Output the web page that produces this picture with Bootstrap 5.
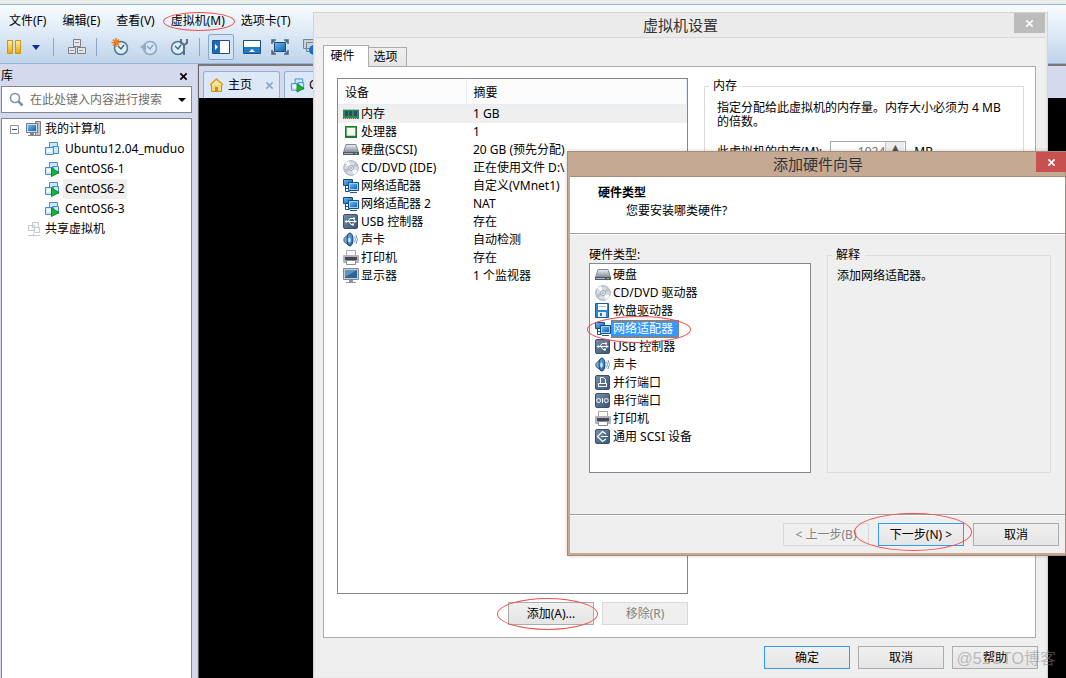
<!DOCTYPE html>
<html lang="zh-CN">
<head>
<meta charset="utf-8">
<meta name="viewport" content="width=device-width, initial-scale=1">
<title>虚拟机设置</title>
<link rel="stylesheet" href="https://cdn.jsdelivr.net/npm/bootstrap@5.3.0/dist/css/bootstrap.min.css">
<style>
body{font:12px/18px "Noto Sans","Noto Sans CJK SC",sans-serif;color:#000;height:100vh;overflow:hidden;background:#ebebeb;cursor:default}
svg{flex:none}
.app{height:100vh;padding-top:4px}
.bars{height:60px;border-top:1px solid #93b5d8;border-bottom:1px solid #93b5d8;background:linear-gradient(#f9fcff,#dce9f6 50%,#bfd3ea)}
.menus{gap:16px;padding:7px 9px 0}
.menus button,.plain{border:0;background:none;padding:0;color:inherit;line-height:18px}
.tools{height:34px;padding-left:5px}
.tools .sep{width:1px;height:18px;background:#88a8cb}
.tools button{border:1px solid transparent;background:none;padding:0;display:flex;align-items:center;justify-content:center}
.tools .clock{width:22px}
.tools .held{border-color:#86a7cf;background:#d3e3f5;width:26px;height:26px;border-radius:2px}
.side{width:198px;flex:none;background:#d4d9ed;padding:2px 5px 0 1px;border-right:1px solid #c7cce0}
.side-head{height:20px}
.find{height:27px;border:1px solid #828790;background:#fff;padding:0 5px 0 7px;margin-bottom:5px}
.find input{border:0;outline:0;min-width:0;padding:0 0 0 6px;background:none}
.find input::placeholder{color:#6d6d6d;opacity:1}
.tree{border:1px solid #828790;border-bottom:0;background:#fff;padding:0 0 0 8px}
.tree li{height:20px;gap:3px}
.tree .kid{padding-left:34px}
.tree .kid span{padding:0 2px;line-height:20px}
.tree .on{background:#efefef}
.stage{border-left:1px solid #646464;border-top:2px solid #777;background:#000}
.tabstrip{height:32px;background:#d4d9ed;padding:5px 0 0 4px;gap:4px}
.tabstrip>button{border:1px solid #8db0d2;border-bottom:0;border-radius:3px 3px 0 0;background:#dce8f6;padding:0 5px;height:27px;gap:4px;min-width:77px;white-space:nowrap}
.win{position:absolute}
.settings{left:313px;right:18px;top:12px;bottom:0;background:#ebebeb;border:1px solid #d4d4d4;border-width:1px 1px 0;padding:0 2px 1px}
.win-title{font:15px/24px "Noto Sans CJK SC",sans-serif;color:#333}
.shut{position:absolute;top:0;right:2px;height:20px;width:31px;border:0;border-radius:0;background:#bcbcbc;color:#fff;padding:0;display:flex;align-items:center;justify-content:center}
.client{background:#efefef;border-top:1px solid #d9d9d9;padding:7px 7px 8px}
.sheet-tabs{z-index:1}
.sheet-tabs button{border:1px solid #acacac;border-bottom:0;border-radius:0;background:linear-gradient(#f0f0f0,#e5e5e5);height:19px;width:39px;padding:0 4px 0 0;margin-left:-1px}
.sheet-tabs .cur{height:22px;width:46px;margin:0 0 -1px;background:#fff;padding:0 7px 1px 0}
.sheet{border:1px solid #acacac;background:#fff;padding:11px 11px 12px 13px;margin-right:2px;min-height:0}
.devs{width:351px;flex:none}
.frame{border:1px solid #828790;background:#fff}
.devs table{width:100%;border-collapse:collapse;table-layout:fixed}
.devs th{font-weight:400;height:25px;padding:3px 0 0 7px;background:#fcfcfc;border-bottom:1px solid #e4edf8;border-right:1px solid #e4edf8}
.devs td{height:18px;padding:0 0 0 7px;line-height:18px;white-space:nowrap}
.devs td:first-child{padding-left:5px}
.devs .sel td{background:#efefef}
.dev{display:flex;align-items:center;gap:2px;height:18px}
.btn3{position:relative;width:86px;height:23px;padding:0;border:1px solid #acacac;border-radius:0;background:linear-gradient(#f0f0f0,#e5e5e5);color:#000;flex:none}
.btn3.main{border-color:#3399ff}
.btn3:disabled{border-color:#d9d9d9;background:#efefef;color:#838383}
.ring{position:absolute;border:1px solid #f04e4e;border-radius:50%;pointer-events:none;z-index:5}
.box{border:1px solid #dcdcdc;margin:0;padding:0 10px 0 12px;min-width:0}
.box legend{float:none;width:auto;font-size:12px;line-height:16px;padding:0 5px 0 4px;margin:0 0 0 -8px}
.box.explain{padding-left:9px}
.box.explain legend{margin-left:-5px}
.note{line-height:14px;margin:7px 0 12px}
.num{width:76px;height:22px;border:1px solid #aaa}
.num input{width:54px;border:0;text-align:right;color:#777;padding:0}
.num i{width:19px;background:#ececec;border-left:1px solid #ccc;text-align:center;font:8px/12px "DejaVu Sans",sans-serif;color:#555}
.wizard{left:567px;right:0;top:151px;height:405px;background:#efefef;border:3px solid #c6a993;border-width:1px 0 3px 3px;outline:1px solid #a78c78;outline-offset:-1px;box-shadow:0 0 4px #0003}
.wizard .win-title{background:#c6a993;border-bottom:1px solid #a78c78;height:25px}
.wizard .shut{background:#c75050;width:30px;right:0}
.wiz-head{background:#fff;height:57px;border-bottom:1px solid #a0a0a0;padding:7px 0 0 28px}
.wiz-body{padding:12px 15px 41px 19px;border-top:1px solid #fff;gap:16px}
.kind-label{line-height:16px}
.kinds{width:222px;padding:2px 5px}
.pick{position:relative}
.pick .dev span{background:#3399ff;color:#fff;outline:1px dotted #c66a1c;outline-offset:-1px;padding:0 6px 0 2px;margin-left:-2px}
.wiz-foot{border-top:1px solid #a0a0a0;box-shadow:inset 0 1px #fff;padding:8px 7px 7px;gap:9px}
.stamp{position:absolute;right:10px;bottom:9px;font:16px/20px "Liberation Sans","Noto Sans CJK SC",sans-serif;color:#888;opacity:.5;z-index:6;pointer-events:none}
</style>
</head>
<body>
<svg class="position-absolute" width="0" height="0" aria-hidden="true">
<defs>
<linearGradient id="gy" x2="0" y2="1"><stop stop-color="#fff0a0"/><stop offset="1" stop-color="#e5a512"/></linearGradient>
<linearGradient id="gb" x2="1" y2="1"><stop stop-color="#6fb7ec"/><stop offset="1" stop-color="#1262b2"/></linearGradient>
<linearGradient id="gs" x2="1" y2="1"><stop stop-color="#7591ae"/><stop offset="1" stop-color="#385470"/></linearGradient>
<linearGradient id="gg" x2="0" y2="1"><stop stop-color="#f0f2f5"/><stop offset="1" stop-color="#7d858f"/></linearGradient>
</defs>
<symbol id="ram" viewBox="0 0 16 16"><path fill="#278a66" d="M0 3h16v10H0z"/><path fill="#9bd3b6" d="M0 3h16v1H0z"/><path fill="#39475a" d="M2 5h3v5H2zM6 5h3v5H6zM11 5h3v5h-3z"/><path stroke="#e2c38e" stroke-dasharray="1 1" d="M1 12.500h14"/></symbol>
<symbol id="cpu" viewBox="0 0 16 16"><path fill="#1c7a32" d="M2 2h12v12H2z"/><path fill="#52b35e" d="M3 3h10v9H3z"/><path fill="#f5f6f1" d="M4 4h8v8H4z"/><path fill="#c8cfc5" d="M4 11h8v1H4z"/></symbol>
<symbol id="hdd" viewBox="0 0 16 16"><path fill="url(#gg)" stroke="#808995" d="M3 2.500h10l2.500 8h-15z"/><path fill="#505a66" d="M0 10h16v3H0z"/><path fill="#aab3bb" d="M1 11h9v1H1z"/><path fill="#54d655" d="M12 11h2v1h-2z"/></symbol>
<symbol id="disc" viewBox="0 0 16 16"><circle cx="8" cy="8" r="7.300" fill="#d7dce4" stroke="#a2aab6"/><path fill="#fff" d="M8 8 2 3l4-2zM8 8l7 3-4 4z"/><path fill="#b9c2ce" d="m8 8 5-6 2 4zM8 8l-5 5-2-4z"/><circle cx="8" cy="8" r="2.500" fill="#eef1f5" stroke="#9aa4b2"/><circle cx="8" cy="8" r=".8" fill="#66758b"/></symbol>
<symbol id="net" viewBox="0 0 16 16"><path fill="url(#gb)" stroke="#174f80" d="M.5 1.500h9v6h-9z"/><path fill="none" stroke="#174f80" d="M2.500 8v5.500h4M2 10.500h3"/><path fill="#9ad4fa" stroke="#0d4f92" d="M5.500 4.500h10v8h-10z"/><path fill="url(#gb)" d="M7 6h7v5H7z"/><path stroke="#29597f" d="M7 14.500h7"/></symbol>
<symbol id="usb" viewBox="0 0 16 16"><rect x=".5" y=".5" width="14" height="14" rx="1.500" fill="url(#gs)" stroke="#3b526a"/><path fill="none" stroke="#fff" d="M3 7.500h9M5 7.500l2-3h3M6 7.500l2 3h2"/><path fill="#fff" d="M1.500 7.500 4 6v3zM11 6l3 1.500L11 9zM10 3.500h2v2h-2zM9 9.500h2v2H9z"/></symbol>
<symbol id="snd" viewBox="0 0 16 16"><path fill="#8eabc7" stroke="#2c5379" d="M1 6.500 6 1.500v12l-5-4z"/><ellipse cx="7" cy="7.500" rx="3" ry="6.500" fill="url(#gb)" stroke="#1b426a"/><ellipse cx="6.500" cy="8" rx="1.300" ry="2.500" fill="#cde6f8"/><path fill="none" stroke="#6f9ac0" d="M11.500 4.500q2 3 0 6M13 3q3 4.500 0 9"/></symbol>
<symbol id="prn" viewBox="0 0 16 16"><path fill="#fafafa" stroke="#a5a9b0" d="M3.500.500h9v5h-9z"/><rect y="5" width="16" height="8" rx="1" fill="#b1b3c0"/><path fill="#45484f" d="M2 7h12v3H2z"/><path fill="#fff" stroke="#878b92" d="M3.500 10.500h9v4h-9z"/></symbol>
<symbol id="mon" viewBox="0 0 16 16"><path fill="#c8ced5" stroke="#7e8995" d="M.5.5h15v11H.5z"/><path fill="#2e6497" d="M2 2h12v8H2z"/><path fill="#5b93c2" d="M2 2h12L2 9z"/><path fill="#8b96a3" d="M6 12h4v2H6zM3 14h10v1H3z"/></symbol>
<symbol id="flop" viewBox="0 0 16 16"><path fill="#2d86d6" stroke="#1a5ca0" d="M.5.5h13v14H.5z"/><path fill="#fff" d="M3 1h9v6H3z"/><path fill="#9cc6ec" d="M4 3h7v1H4z"/><path fill="#e9f2fa" d="M3 9h8v5H3z"/><path fill="#2873b7" d="M5 10h2v3H5z"/></symbol>
<symbol id="par" viewBox="0 0 16 16"><rect x=".5" y=".5" width="14" height="14" rx="1.500" fill="url(#gs)" stroke="#3b526a"/><path fill="none" stroke="#fff" d="M5.500 8.500v-6h3l2 2v4M3.500 8.500h8v3h-8z"/></symbol>
<symbol id="ser" viewBox="0 0 16 16"><rect x=".5" y=".5" width="14" height="14" rx="1.500" fill="url(#gs)" stroke="#3b526a"/><g fill="none" stroke="#fff"><circle cx="3.700" cy="7.500" r="2"/><circle cx="11.300" cy="7.500" r="2"/><path d="M7.500 5v5"/></g></symbol>
<symbol id="scsi" viewBox="0 0 16 16"><rect x=".5" y=".5" width="14" height="14" rx="1.500" fill="url(#gs)" stroke="#3b526a"/><path fill="none" stroke="#fff" stroke-width="1.200" d="M11 5 7.500 2.500l-5 5 5 5L11 10M6 7.500h7"/></symbol>
<symbol id="vm" viewBox="0 0 16 16"><g fill="#cfe9fc" stroke="#3f8fce"><path d="M5.500 1.500h8v7h-8z"/><path d="M8.500 5.500h6v7h-6z"/><path d="M1.500 6.500h8v7h-8z"/></g><path fill="#f4fbff" d="M3 8h5v3H3z"/></symbol>
<symbol id="vmon" viewBox="0 0 16 16"><use href="#vm"/><path fill="#17b436" stroke="#0b8b24" d="m7.500 7 7.500 4.500-7.500 4z"/></symbol>
<symbol id="clk" viewBox="0 0 18 18"><circle cx="10" cy="10" r="6.500" fill="#dceefb" stroke="#4d7594" stroke-width="1.500"/><path fill="none" stroke="#3b5f7e" stroke-width="1.300" d="m7 8 3 3 3-4"/></symbol>
<symbol id="x" viewBox="0 0 10 10"><path fill="none" stroke="currentColor" stroke-width="1.800" d="m1.500 1.500 7 7m0-7-7 7"/></symbol>
</svg>

<div class="app d-flex flex-column">
  <header class="bars flex-shrink-0">
    <nav class="menus d-flex">
      <button>文件(F)</button><button>编辑(E)</button><button>查看(V)</button>
      <button class="position-relative">虚拟机(M)<span class="ring" style="inset:0 -10px -1px -8px"></span></button>
      <button>选项卡(T)</button>
    </nav>
    <div class="tools d-flex align-items-center">
      <button aria-label="暂停"><svg width="16" height="16"><path fill="url(#gy)" stroke="#ce9410" d="M1.500 1.500h5v13h-5zM9.500 1.500h5v13h-5z"/></svg></button>
      <button class="ms-1 me-1 ps-1" aria-label="电源选项"><svg width="8" height="5"><path fill="#0b2d98" d="M0 0h8L4 5z"/></svg></button>
      <span class="sep ms-2 me-2"></span>
      <button class="ms-1" aria-label="发送按键"><svg width="20" height="18"><g fill="#e6e6e6" stroke="#7c7f83"><path d="M6.500 1.500h7v7h-7zM1.500 9.500h7v6h-7zM10.500 9.500h8v6h-8z"/></g><path fill="#999" d="M8 4h4v1H8zM3 12h4v1H3zM12 12h4v1h-4z"/></svg></button>
      <span class="sep ms-2 me-2"></span>
      <button class="clock ms-1" aria-label="拍摄快照"><svg width="18" height="18"><use href="#clk"/><path stroke="#ef7c18" stroke-width="1.600" d="M5 0v9M.5 4.500h9M2 1.500l6 6m0-6-6 6"/></svg></button>
      <button class="clock ms-2 opacity-50" aria-label="恢复快照"><svg width="20" height="18"><use href="#clk" width="18" height="18"/><path fill="#58768f" d="m0 9 6-4v8z"/></svg></button>
      <button class="clock ms-2" aria-label="快照管理"><svg width="20" height="18"><use href="#clk" x="-2" width="18" height="18"/><path fill="none" stroke="#5c7183" stroke-width="2" d="M11 1v4l3 2 3-2V1m-3 6v10"/></svg></button>
      <span class="sep ms-2 me-2"></span>
      <button class="held" aria-label="显示库"><svg width="18" height="14"><path fill="#fff" stroke="#1d4f85" d="M.5.5h17v13H.5z"/><path fill="#176cbd" d="M1 1h7v12H1z"/><path fill="#fff" d="m3 4 3 3-3 3z"/></svg></button>
      <button class="ms-2" aria-label="缩略图栏"><svg width="18" height="14"><path fill="#fff" stroke="#1d4f85" d="M.5.5h17v13H.5z"/><path fill="#217cc8" d="M1 7h16v6H1z"/><path fill="#fff" d="m6 12 3-3 3 3z"/></svg></button>
      <button class="ms-2" aria-label="全屏"><svg width="18" height="16"><path fill="url(#gb)" stroke="#174f80" d="M3.500 3.500h11v9h-11z"/><path fill="none" stroke="#49677f" stroke-width="1.500" d="M1 5V1h4M13 1h4v4M17 11v4h-4M5 15H1v-4M1 1l3 3m13-3-3 3m3 11-3-3M1 15l3-3"/></svg></button>
      <button class="ms-2 ps-1" aria-label="Unity"><svg width="18" height="16"><path fill="#c9d0d8" stroke="#758494" d="M.5.5h13v9H.5zM3.500 3.500h13v9h-13z"/><circle cx="11" cy="11" r="5" fill="#1473c8"/><path stroke="#fff" stroke-width="2" d="M11 10v4M11 7v2"/></svg></button>
    </div>
  </header>

  <div class="d-flex flex-grow-1">
    <aside class="side d-flex flex-column">
      <div class="side-head d-flex justify-content-between align-items-center">
        <span>库</span><button class="plain d-flex pe-1" aria-label="关闭库"><svg width="9" height="9"><use href="#x"/></svg></button>
      </div>
      <label class="find d-flex align-items-center">
        <svg width="15" height="15" fill="none" stroke="#7a90b4"><circle cx="6" cy="6" r="4.500" stroke-width="1.600"/><path stroke-width="2.500" d="m9.500 9.500 4 4"/></svg>
        <input class="flex-grow-1" placeholder="在此处键入内容进行搜索" aria-label="搜索">
        <svg width="8" height="4"><path d="M0 0h8L4 4z"/></svg>
      </label>
      <ul class="tree list-unstyled flex-grow-1 mb-0">
        <li class="d-flex align-items-center"><svg width="9" height="9"><path fill="#fff" stroke="#919191" d="M.5.500h8v8h-8z"/><path stroke="#2a4ba0" d="M2 4.500h5"/></svg>
          <svg class="ms-1" width="16" height="16"><path fill="#bfc4ca" stroke="#777e87" d="M9.500.5h5v14h-5z"/><path fill="#d5dbe1" stroke="#747e89" d="M.5 2.500h11v9H.5z"/><path fill="url(#gb)" d="M2 4h8v6H2z"/><path fill="#7d8792" d="M4 12h4v2H4zM2 14h8v1H2z"/></svg><span>我的计算机</span></li>
        <li class="kid d-flex align-items-center"><svg width="16" height="16"><use href="#vm"/></svg><span>Ubuntu12.04_muduo</span></li>
        <li class="kid d-flex align-items-center"><svg width="16" height="16"><use href="#vmon"/></svg><span>CentOS6-1</span></li>
        <li class="kid d-flex align-items-center"><svg width="16" height="16"><use href="#vmon"/></svg><span class="on">CentOS6-2</span></li>
        <li class="kid d-flex align-items-center"><svg width="16" height="16"><use href="#vmon"/></svg><span>CentOS6-3</span></li>
        <li class="d-flex align-items-center ps-3"><svg width="16" height="16" fill="#fafafa" stroke="#c9c9c9"><path d="M6.500 1.500h6v5h-6zM2.500 4.500h6v5h-6zM8.500 6.500h5v5h-5zM7.500 12v2M2 14.500h12"/></svg><span>共享虚拟机</span></li>
      </ul>
    </aside>
    <main class="stage flex-grow-1">
      <div class="tabstrip d-flex">
        <button class="d-flex align-items-center"><svg width="15" height="16"><path fill="#f7d879" stroke="#c98f20" d="M2.500 8v6.500h10V8"/><path fill="#fbe7a2" stroke="#d89b23" stroke-width="1.500" d="m1 8 6.500-6L14 8"/><path fill="#c98a2c" d="M6 10h3v5H6z"/></svg><span>主页</span><svg class="ms-auto" width="9" height="9" color="#85a9cc"><use href="#x"/></svg></button>
        <button class="d-flex align-items-center"><svg width="15" height="16"><use href="#vmon"/></svg><span>CentOS6-2</span></button>
      </div>
    </main>
  </div>
</div>

<section class="win settings d-flex flex-column" aria-label="虚拟机设置">
  <div class="win-title text-center">虚拟机设置</div>
  <button class="shut" aria-label="关闭"><svg width="9" height="9"><use href="#x"/></svg></button>
  <div class="client flex-grow-1 d-flex flex-column">
    <div class="sheet-tabs d-flex align-items-end position-relative">
      <button class="cur">硬件</button><button>选项</button>
    </div>
    <div class="sheet d-flex flex-grow-1">
      <div class="devs d-flex flex-column">
        <div class="frame flex-grow-1">
          <table>
            <colgroup><col style="width:128px"><col></colgroup>
            <thead><tr><th>设备</th><th>摘要</th></tr></thead>
            <tbody>
            <tr class="sel"><td><div class="dev"><svg width="16" height="16"><use href="#ram"/></svg><span>内存</span></div></td><td>1 GB</td></tr>
            <tr><td><div class="dev"><svg width="16" height="16"><use href="#cpu"/></svg><span>处理器</span></div></td><td>1</td></tr>
            <tr><td><div class="dev"><svg width="16" height="16"><use href="#hdd"/></svg><span>硬盘(SCSI)</span></div></td><td>20 GB (预先分配)</td></tr>
            <tr><td><div class="dev"><svg width="16" height="16"><use href="#disc"/></svg><span>CD/DVD (IDE)</span></div></td><td>正在使用文件 D:\</td></tr>
            <tr><td><div class="dev"><svg width="16" height="16"><use href="#net"/></svg><span>网络适配器</span></div></td><td>自定义(VMnet1)</td></tr>
            <tr><td><div class="dev"><svg width="16" height="16"><use href="#net"/></svg><span>网络适配器 2</span></div></td><td>NAT</td></tr>
            <tr><td><div class="dev"><svg width="16" height="16"><use href="#usb"/></svg><span>USB 控制器</span></div></td><td>存在</td></tr>
            <tr><td><div class="dev"><svg width="16" height="16"><use href="#snd"/></svg><span>声卡</span></div></td><td>自动检测</td></tr>
            <tr><td><div class="dev"><svg width="16" height="16"><use href="#prn"/></svg><span>打印机</span></div></td><td>存在</td></tr>
            <tr><td><div class="dev"><svg width="16" height="16"><use href="#mon"/></svg><span>显示器</span></div></td><td>1 个监视器</td></tr>
            </tbody>
          </table>
        </div>
        <div class="d-flex justify-content-end gap-2 pt-2">
          <button class="btn3">添加(A)...<span class="ring" style="inset:-5px -5px -6px -12px"></span></button>
          <button class="btn3" disabled>移除(R)</button>
        </div>
      </div>
      <fieldset class="box ms-3 flex-grow-1 align-self-start">
        <legend>内存</legend>
        <p class="note">指定分配给此虚拟机的内存量。内存大小必须为 4 MB 的倍数。</p>
        <div class="d-flex align-items-center">
          <label for="mem">此虚拟机的内存(M):</label>
          <div class="num d-flex ms-2 me-2"><input id="mem" value="1024"><i>▲</i></div>MB
        </div>
      </fieldset>
    </div>
    <div class="d-flex justify-content-end gap-2 pt-2 mt-auto">
      <button class="btn3 main">确定</button><button class="btn3">取消</button><button class="btn3">帮助</button>
    </div>
  </div>
</section>

<section class="win wizard d-flex flex-column" aria-label="添加硬件向导">
  <div class="win-title text-center">添加硬件向导</div>
  <button class="shut" aria-label="关闭"><svg width="9" height="9"><use href="#x"/></svg></button>
  <div class="wiz-head"><div class="fw-bold">硬件类型</div><div class="ps-4 ms-1">您要安装哪类硬件?</div></div>
  <div class="wiz-body d-flex flex-grow-1">
    <div class="d-flex flex-column">
      <div id="kl" class="kind-label">硬件类型:</div>
      <ul class="frame kinds list-unstyled mb-0 flex-grow-1" role="listbox" aria-labelledby="kl">
        <li class="dev" role="option"><svg width="16" height="16"><use href="#hdd"/></svg><span>硬盘</span></li>
        <li class="dev" role="option"><svg width="16" height="16"><use href="#disc"/></svg><span>CD/DVD 驱动器</span></li>
        <li class="dev" role="option"><svg width="16" height="16"><use href="#flop"/></svg><span>软盘驱动器</span></li>
        <li class="pick" role="option" aria-selected="true"><div class="dev"><svg width="16" height="16"><use href="#net"/></svg><span>网络适配器</span></div><b class="ring" style="inset:-4px 114px -5px -8px"></b></li>
        <li class="dev" role="option"><svg width="16" height="16"><use href="#usb"/></svg><span>USB 控制器</span></li>
        <li class="dev" role="option"><svg width="16" height="16"><use href="#snd"/></svg><span>声卡</span></li>
        <li class="dev" role="option"><svg width="16" height="16"><use href="#par"/></svg><span>并行端口</span></li>
        <li class="dev" role="option"><svg width="16" height="16"><use href="#ser"/></svg><span>串行端口</span></li>
        <li class="dev" role="option"><svg width="16" height="16"><use href="#prn"/></svg><span>打印机</span></li>
        <li class="dev" role="option"><svg width="16" height="16"><use href="#scsi"/></svg><span>通用 SCSI 设备</span></li>
      </ul>
    </div>
    <fieldset class="box explain flex-grow-1"><legend>解释</legend><p class="mb-0 mt-1">添加网络适配器。</p></fieldset>
  </div>
  <div class="wiz-foot d-flex justify-content-end">
    <button class="btn3" disabled>&lt; 上一步(B)</button>
    <button class="btn3 main">下一步(N) &gt;<span class="ring" style="inset:-11px -9px -6px -25px"></span></button>
    <button class="btn3">取消</button>
  </div>
</section>
<div class="stamp">@51CTO博客</div>
<script src="https://cdn.jsdelivr.net/npm/bootstrap@5.3.0/dist/js/bootstrap.bundle.min.js"></script>
</body>
</html>
